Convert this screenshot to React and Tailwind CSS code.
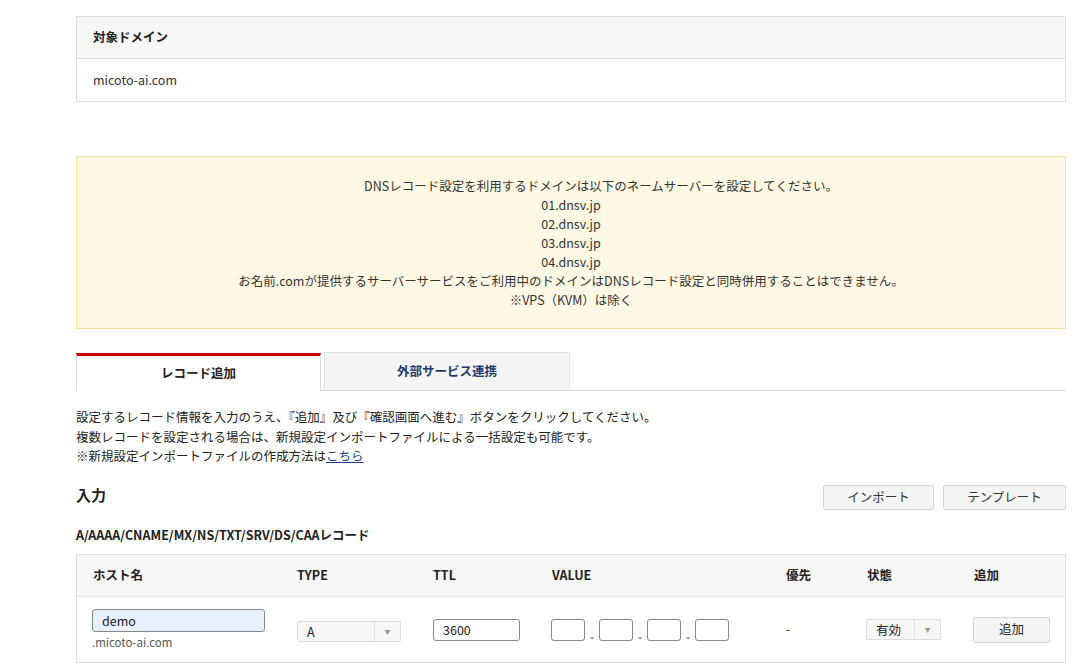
import React from "react";

const font = { fontFamily: '"Noto Sans CJK JP", "Noto Sans", sans-serif' };

const Caret = () => (
  <span className="flex w-[26px] items-center justify-center border-l border-[#e3e3e3] text-[6px] text-[#999]">▼</span>
);

const Select = ({ value, width }) => (
  <div className={`flex h-[21px] ${width} rounded-[2px] border border-[#dcdcdc] bg-[#f7f7f7]`}>
    <span className="flex-1 pl-[9px] text-[12.5px] leading-[20px] text-[#222]">{value}</span>
    <Caret />
  </div>
);

const Octet = () => (
  <div className="h-[22px] w-[34px] rounded-[3px] border border-[#888] bg-white" />
);

const Dot = () => <span className="w-[4px] text-center leading-[14px]">.</span>;

export default function App() {
  return (
    <div className="min-h-[671px] w-[1092px] bg-white pt-4 text-[12.5px] text-[#333]" style={font}>
      <div className="ml-[76px] w-[990px]">
        {/* target domain */}
        <div className="border border-[#dddddd]">
          <div className="flex h-[42px] items-center border-b border-[#dddddd] bg-[#f7f7f7] px-[16px] font-bold text-[#222]">
            対象ドメイン
          </div>
          <div className="flex h-[42px] items-center px-[16px]">micoto-ai.com</div>
        </div>

        {/* name server notice */}
        <div className="mt-[54px] flex h-[173px] flex-col items-center justify-center border border-[#f3e49a] bg-[#fef9e4] text-center leading-[19px] text-[#333]">
          <p className="pl-[60px]">DNSレコード設定を利用するドメインは以下のネームサーバーを設定してください。</p>
          <p>01.dnsv.jp</p>
          <p>02.dnsv.jp</p>
          <p>03.dnsv.jp</p>
          <p>04.dnsv.jp</p>
          <p>お名前.comが提供するサーバーサービスをご利用中のドメインはDNSレコード設定と同時併用することはできません。</p>
          <p>※VPS（KVM）は除く</p>
        </div>

        {/* tabs */}
        <div className="mt-[23px] flex items-end border-b border-[#dddddd]">
          <div className="-mb-px flex h-[38px] w-[245px] items-center justify-center border-x border-[#dddddd] border-t-[3px] border-t-[#d0000b] bg-white font-bold text-[#222]">
            レコード追加
          </div>
          <div className="ml-[3px] flex h-[38px] w-[246px] items-center justify-center border border-b-0 border-[#e3e3e3] bg-[#f5f5f5] font-bold text-[#1d3a6e]">
            外部サービス連携
          </div>
        </div>

        <div className="mt-[16px] leading-[19.5px] text-[#222]">
          <p>設定するレコード情報を入力のうえ、『追加』及び『確認画面へ進む』ボタンをクリックしてください。</p>
          <p>複数レコードを設定される場合は、新規設定インポートファイルによる一括設定も可能です。</p>
          <p>
            ※新規設定インポートファイルの作成方法は
            <a href="#" className="text-[#1a3f8f] underline">こちら</a>
          </p>
        </div>

        {/* input heading */}
        <div className="mt-[19px] flex items-start justify-between">
          <h2 className="text-[15px] font-bold leading-[20px] text-[#222]">入力</h2>
          <div className="flex gap-[9px]">
            <button className="h-[25px] w-[111px] rounded-[2px] border border-[#d6d6d6] bg-[#f5f5f5] text-[12.5px] text-[#333]">
              インポート
            </button>
            <button className="h-[25px] w-[123px] rounded-[2px] border border-[#d6d6d6] bg-[#f5f5f5] text-[12.5px] text-[#333]">
              テンプレート
            </button>
          </div>
        </div>

        <h3 className="mt-[16px] font-bold text-[#222]">A/AAAA/CNAME/MX/NS/TXT/SRV/DS/CAAレコード</h3>

        {/* record table */}
        <div className="mt-[10px] border border-[#dddddd]">
          <div className="grid h-[42px] grid-cols-[204px_136px_119px_234px_81px_107px_1fr] items-center border-b border-[#dddddd] bg-[#f7f7f7] pl-[16px] font-bold text-[#222]">
            <span>ホスト名</span>
            <span>TYPE</span>
            <span>TTL</span>
            <span>VALUE</span>
            <span>優先</span>
            <span>状態</span>
            <span>追加</span>
          </div>
          <div className="grid h-[65px] grid-cols-[204px_136px_119px_234px_81px_107px_1fr] items-center pl-[15px]">
            <div className="flex flex-col">
              <div className="h-[23px] w-[173px] rounded-[3px] border border-[#888] bg-[#e8f0fe] pl-[9px] leading-[21px] text-[#222]">demo</div>
              <span className="mt-[2px] text-[11.5px] text-[#555]">.micoto-ai.com</span>
            </div>
            <div className="mt-[4px] pl-[1px]">
              <Select value="A" width="w-[104px]" />
            </div>
            <div className="pl-[1px]">
              <div className="h-[22px] w-[87px] rounded-[3px] border border-[#888] bg-white pl-[9px] leading-[20px] text-[#222]">3600</div>
            </div>
            <div className="flex items-end gap-[5px]">
              <Octet />
              <Dot />
              <Octet />
              <Dot />
              <Octet />
              <Dot />
              <Octet />
            </div>
            <span className="pl-[1px]">-</span>
            <div>
              <Select value="有効" width="w-[75px]" />
            </div>
            <div>
              <button className="h-[26px] w-[77px] rounded-[2px] border border-[#d6d6d6] bg-[#f5f5f5] text-[12.5px] text-[#222]">
                追加
              </button>
            </div>
          </div>
        </div>
      </div>
    </div>
  );
}
